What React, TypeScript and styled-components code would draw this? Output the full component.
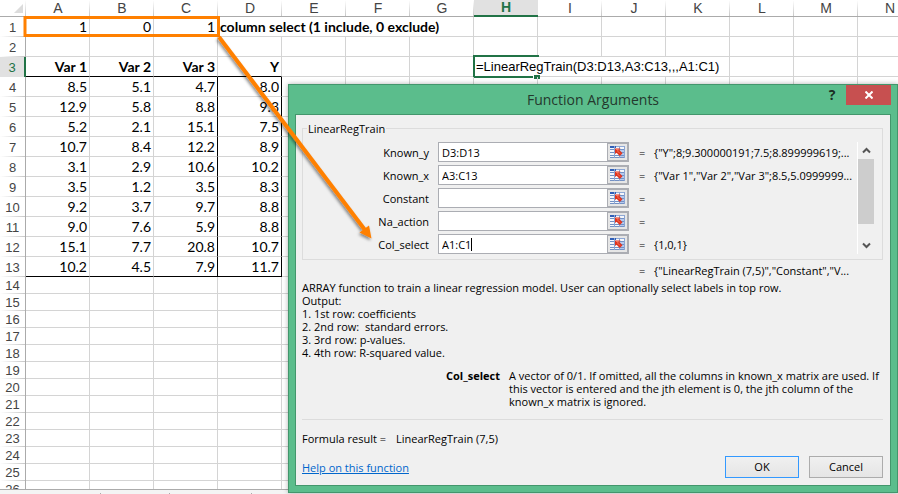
import React from "react";
import styled, { createGlobalStyle, css } from "styled-components";

const GlobalStyle = createGlobalStyle`
  * { box-sizing: border-box; }
  html, body, #root { height: 100%; }
  body { margin: 0; overflow: hidden; background: #fff; }
`;

const uiFont = `"Open Sans", "Noto Sans", sans-serif`;
const sheetFont = `Lato, "Open Sans", sans-serif`;
const headFont = `"Liberation Sans", Arial, sans-serif`;

const Workbook = styled.div`
  position: relative;
  display: flex;
  flex-direction: column;
  height: 100vh;
  overflow: hidden;
`;

const SheetArea = styled.div`
  position: relative;
  flex: 1;
  min-height: 0;
  overflow: hidden;
`;

const Sheet = styled.table`
  width: 922px;
  table-layout: fixed;
  border-collapse: separate;
  border-spacing: 0;
  font: 14px/19px ${sheetFont};
  color: #000;
`;

const HeadCol = styled.col`
  width: 26px;
`;

const ColHead = styled.th<{ $active?: boolean }>`
  height: 17px;
  padding: 0;
  font: 14px/16px ${headFont};
  color: #444;
  border-bottom: 1px solid #ababab;
  background: linear-gradient(#fff, #c8c8c8) right / 1px 100% no-repeat;
  ${(p) =>
    p.$active &&
    css`
      color: #217346;
      font-weight: bold;
      line-height: 15px;
      background: #e1e1e1;
      border-bottom: 2px solid #217346;
    `}
`;

const Corner = styled.th`
  padding: 0 3px 3px 0;
  border-bottom: 1px solid #ababab;
  background: linear-gradient(#fff, #c8c8c8) right / 1px 100% no-repeat;
  vertical-align: bottom;
  svg { display: block; margin-left: auto; }
`;

const RowHead = styled.th<{ $active?: boolean; $short?: boolean }>`
  height: ${(p) => (p.$short ? 17 : 20)}px;
  padding: 0;
  font: 13px/${(p) => (p.$short ? 16 : 19)}px ${headFont};
  color: #444;
  border-right: 1px solid #ababab;
  background: linear-gradient(90deg, #fff, #c8c8c8) bottom / 100% 1px no-repeat;
  ${(p) =>
    p.$active &&
    css`
      color: #217346;
      background: #e1e1e1;
      border-right: 2px solid #217346;
    `}
`;

const Cell = styled.td<{ $bold?: boolean; $left?: boolean; $right?: boolean; $bottom?: boolean }>`
  position: relative;
  padding: 0 2px 0 ${(p) => (p.$left ? 2 : 0)}px;
  text-align: ${(p) => (p.$left ? "left" : "right")};
  font-weight: ${(p) => (p.$bold ? 700 : 400)};
  white-space: nowrap;
  border-right: 1px solid ${(p) => (p.$right ? "#000" : "#d4d4d4")};
  border-bottom: 1px solid ${(p) => (p.$bottom ? "#000" : "#d4d4d4")};
`;

const EditCell = styled(Cell)`
  padding-left: 2px;
  text-align: left;
  font-family: ${headFont};
  font-size: 13px;
`;

const EditFrame = styled.span`
  position: absolute;
  left: -1px;
  top: -2px;
  width: 66px;
  height: 23px;
  border: 2px solid #217346;
  border-right: 0;
  &::after {
    content: "";
    position: absolute;
    right: -1px;
    bottom: -3px;
    width: 6px;
    height: 4px;
    background: #217346;
    border-left: 1px solid #fff;
    border-top: 1px solid #fff;
  }
`;

const EditText = styled.span`
  position: relative;
`;

const TabStrip = styled.div`
  display: flex;
  height: 5px;
  padding-top: 3px;
  border-top: 1px solid #ababab;
  background: #f4f4f4;
`;

const TabEdge = styled.span<{ $w: number }>`
  width: ${(p) => p.$w}px;
  border-right: 1px solid #ababab;
`;

const Dialog = styled.section`
  position: absolute;
  top: 84px;
  left: 288px;
  right: 0;
  padding: 0 6px 6px;
  font: 11px/13px ${uiFont};
  color: #000;
  background: #5bbd8c;
  border: 1px solid #43966c;
  box-shadow: 0 0 5px rgba(0, 0, 0, 0.3);
`;

const TitleBar = styled.header`
  position: relative;
  display: flex;
  align-items: center;
  justify-content: center;
  height: 29px;
`;

const Title = styled.h1`
  margin: 0;
  font: 14px/29px ${uiFont};
  color: #24382d;
`;

const TitleTools = styled.div`
  position: absolute;
  top: 0;
  right: 0;
  display: flex;
  align-items: center;
`;

const HelpButton = styled.button`
  width: 28px;
  height: 20px;
  padding: 0;
  border: 0;
  background: none;
  font: bold 14px/20px ${uiFont};
  color: #1b2d23;
`;

const CloseButton = styled.button`
  display: flex;
  align-items: center;
  justify-content: center;
  width: 45px;
  height: 20px;
  padding: 0;
  border: 0;
  background: #c75050;
`;

const Body = styled.div`
  padding: 7px 7px 7px 6px;
  background: #f0f0f0;
  border: 1px solid #43966c;
`;

const Group = styled.fieldset`
  display: flex;
  gap: 0;
  min-width: 0;
  margin: 0;
  padding: 7px 8px 5px 0;
  border: 1px solid #dcdcdc;
`;

const Legend = styled.legend`
  margin-left: 4px;
  padding: 0 1px;
`;

const Rows = styled.div`
  flex: 1;
  display: flex;
  flex-direction: column;
  gap: 3px;
`;

const Row = styled.div`
  display: grid;
  grid-template-columns: 126px minmax(120px, 1fr) 5px 203px;
  column-gap: 10px;
  align-items: center;
  height: 20px;
`;

const RowLabel = styled.label`
  text-align: right;
`;

const RefBox = styled.div`
  position: relative;
  display: flex;
  height: 20px;
  margin-left: -1px;
`;

const RefInput = styled.input`
  flex: 1;
  min-width: 0;
  padding: 1px 3px 0;
  border: 1px solid #abadb3;
  border-right: 0;
  border-radius: 0;
  outline: 0;
  background: #fff;
  font: 11px/16px ${uiFont};
  color: #000;
`;

const Caret = styled.span`
  position: absolute;
  left: 33px;
  top: 4px;
  width: 1px;
  height: 13px;
  background: #000;
`;

const PickButton = styled.button`
  display: flex;
  align-items: center;
  justify-content: center;
  width: 22px;
  padding: 0;
  border: 2px solid #abadb3;
  border-left-width: 1px;
  background: #e6e6e6;
`;

const Value = styled.output`
  white-space: nowrap;
`;

const ScrollBar = styled.div`
  display: flex;
  flex-direction: column;
  width: 17px;
  border-left: 1px solid #fff;
`;

const ScrollButton = styled.button`
  display: flex;
  align-items: center;
  justify-content: center;
  height: 17px;
  padding: 0;
  border: 0;
  background: none;
`;

const Track = styled.div`
  flex: 1;
`;

const Thumb = styled.div`
  height: 65px;
  background: #cdcdcd;
`;

const ResultRow = styled(Row)`
  height: 21px;
  margin: 0 26px 0 1px;
`;

const Description = styled.p`
  margin: 0;
  white-space: pre-line;
`;

const ArgHelp = styled.dl`
  display: grid;
  grid-template-columns: 198px 1fr;
  column-gap: 9px;
  margin: 10px 0 11px;
  dt { font-weight: 700; text-align: right; }
  dd { margin: 0; }
`;

const Rule = styled.hr`
  margin: 0;
  border: 0;
  border-top: 1px solid #dcdcdc;
`;

const FormulaResult = styled.p`
  display: flex;
  gap: 10px;
  margin: 12px 0 11px;
`;

const Footer = styled.footer`
  display: flex;
  align-items: center;
  gap: 10px;
`;

const HelpLink = styled.a`
  margin-right: auto;
  color: #0066cc;
  text-decoration: underline;
`;

const PushButton = styled.button<{ $primary?: boolean }>`
  width: 74px;
  height: 22px;
  padding: 0;
  border: 1px solid ${(p) => (p.$primary ? "#3399ff" : "#acacac")};
  background: linear-gradient(#f0f0f0, #e5e5e5);
  font: 11px/18px ${uiFont};
  color: #000;
`;

const Annotation = styled.svg`
  position: absolute;
  left: 0;
  top: 0;
  pointer-events: none;
`;

const columns = "ABCDEFGHIJKLMN".split("");

const data = [
  ["8.5", "5.1", "4.7", "8.0"],
  ["12.9", "5.8", "8.8", "9.3"],
  ["5.2", "2.1", "15.1", "7.5"],
  ["10.7", "8.4", "12.2", "8.9"],
  ["3.1", "2.9", "10.6", "10.2"],
  ["3.5", "1.2", "3.5", "8.3"],
  ["9.2", "3.7", "9.7", "8.8"],
  ["9.0", "7.6", "5.9", "8.8"],
  ["15.1", "7.7", "20.8", "10.7"],
  ["10.2", "4.5", "7.9", "11.7"],
];

const args = [
  { name: "Known_y", ref: "D3:D13", value: '{"Y";8;9.300000191;7.5;8.899999619;...' },
  { name: "Known_x", ref: "A3:C13", value: '{"Var 1","Var 2","Var 3";8.5,5.0999999...' },
  { name: "Constant", ref: "", value: "" },
  { name: "Na_action", ref: "", value: "" },
  { name: "Col_select", ref: "A1:C1", value: "{1,0,1}", editing: true },
];

const description = `ARRAY function to train a linear regression model. User can optionally select labels in top row.
Output:
1. 1st row: coefficients
2. 2nd row:\u00a0 standard errors.
3. 3rd row: p-values.
4. 4th row: R-squared value.`;

function Blank({ count }: { count: number }) {
  return (
    <>
      {Array.from({ length: count }, (_, i) => (
        <Cell key={i} />
      ))}
    </>
  );
}

function PickIcon() {
  return (
    <svg width="16" height="14" viewBox="0 0 16 14" aria-hidden="true">
      <g shapeRendering="crispEdges">
        <rect x="0" y="1" width="15" height="12" fill="#f4f7fc" />
        <rect x="0" y="1" width="6" height="2" fill="#2f5fb8" />
        <rect x="6" y="1" width="9" height="1" fill="#8fa9d6" />
        <rect x="10" y="5" width="5" height="7" fill="#b5c9ee" />
        <path d="M0 4.5h15M0 7.5h15M0 10.5h15M0 12.5h15" stroke="#7391c4" />
        <path d="M4.500 1v12M9.500 1v12M14.500 1v12" stroke="#8ba4d2" />
      </g>
      <path d="M5 3.500h5.500L9.300 5l3.200 3.200-2.700 2.800-3.200-3.300L5 9z" fill="#e0321c" />
      <path d="M6 4.500h2.500L7.500 6l2.500 2.500" fill="none" stroke="#f5775f" />
    </svg>
  );
}

function Chevron({ up }: { up?: boolean }) {
  return (
    <svg width="9" height="7" viewBox="0 0 9 7" aria-hidden="true">
      <path d={up ? "M1 5.500 4.500 2 8 5.500" : "M1 1.500 4.500 5 8 1.500"} fill="none" stroke="#555" strokeWidth="2" />
    </svg>
  );
}

function Spreadsheet() {
  return (
    <Sheet>
      <colgroup>
        <HeadCol />
        {columns.map((c) => (
          <col key={c} />
        ))}
      </colgroup>
      <thead>
        <tr>
          <Corner>
            <svg width="9" height="9" viewBox="0 0 9 9" aria-hidden="true">
              <path d="M9 0v9H0z" fill="#dcdcdc" />
            </svg>
          </Corner>
          {columns.map((c) => (
            <ColHead key={c} scope="col" $active={c === "H"}>
              {c}
            </ColHead>
          ))}
        </tr>
      </thead>
      <tbody>
        <tr>
          <RowHead scope="row">1</RowHead>
          <Cell>1</Cell>
          <Cell>0</Cell>
          <Cell>1</Cell>
          <Cell colSpan={4} $left $bold>
            column select (1 include, 0 exclude)
          </Cell>
          <Blank count={7} />
        </tr>
        <tr>
          <RowHead scope="row">2</RowHead>
          <Blank count={14} />
        </tr>
        <tr>
          <RowHead scope="row" $active>
            3
          </RowHead>
          {["Var 1", "Var 2", "Var 3", "Y"].map((h) => (
            <Cell key={h} $bold $bottom>
              {h}
            </Cell>
          ))}
          <Blank count={3} />
          <EditCell colSpan={4}>
            <EditFrame />
            <EditText>=LinearRegTrain(D3:D13,A3:C13,,,A1:C1)</EditText>
          </EditCell>
          <Blank count={3} />
        </tr>
        {data.map((row, r) => (
          <tr key={r}>
            <RowHead scope="row">{r + 4}</RowHead>
            {row.map((v, c) => (
              <Cell key={c} $right={c >= 2} $bottom={r === data.length - 1}>
                {v}
              </Cell>
            ))}
            <Blank count={10} />
          </tr>
        ))}
        {Array.from({ length: 13 }, (_, i) => (
          <tr key={i}>
            <RowHead scope="row" $short>
              {i + 14}
            </RowHead>
            <Blank count={14} />
          </tr>
        ))}
      </tbody>
    </Sheet>
  );
}

function FunctionArguments() {
  return (
    <Dialog role="dialog" aria-labelledby="dialog-title">
      <TitleBar>
        <Title id="dialog-title">Function Arguments</Title>
        <TitleTools>
          <HelpButton aria-label="Help">?</HelpButton>
          <CloseButton aria-label="Close">
            <svg width="8" height="8" viewBox="0 0 8 8" aria-hidden="true">
              <path d="M0.500 0.500l7 7M7.500 0.500l-7 7" stroke="#fff" strokeWidth="2" />
            </svg>
          </CloseButton>
        </TitleTools>
      </TitleBar>
      <Body>
        <Group>
          <Legend>LinearRegTrain</Legend>
          <Rows>
            {args.map((a) => (
              <Row key={a.name}>
                <RowLabel htmlFor={a.name}>{a.name}</RowLabel>
                <RefBox>
                  <RefInput id={a.name} defaultValue={a.ref} />
                  {a.editing && <Caret />}
                  <PickButton aria-label={`Select range for ${a.name}`}>
                    <PickIcon />
                  </PickButton>
                </RefBox>
                <span>=</span>
                <Value>{a.value}</Value>
              </Row>
            ))}
          </Rows>
          <ScrollBar>
            <ScrollButton aria-label="Scroll up">
              <Chevron up />
            </ScrollButton>
            <Track>
              <Thumb />
            </Track>
            <ScrollButton aria-label="Scroll down">
              <Chevron />
            </ScrollButton>
          </ScrollBar>
        </Group>
        <ResultRow>
          <span />
          <span />
          <span>=</span>
          <Value>{'{"LinearRegTrain (7,5)","Constant","V...'}</Value>
        </ResultRow>
        <Description>{description}</Description>
        <ArgHelp>
          <dt>Col_select</dt>
          <dd>
            A vector of 0/1. If omitted, all the columns in known_x matrix are used. If this vector is entered and the
            jth element is 0, the jth column of the known_x matrix is ignored.
          </dd>
        </ArgHelp>
        <Rule />
        <FormulaResult>
          <span>Formula result =</span>
          <span>LinearRegTrain (7,5)</span>
        </FormulaResult>
        <Footer>
          <HelpLink href="#help">Help on this function</HelpLink>
          <PushButton $primary>OK</PushButton>
          <PushButton>Cancel</PushButton>
        </Footer>
      </Body>
    </Dialog>
  );
}

function SelectionArrow() {
  return (
    <Annotation width="400" height="260" viewBox="0 0 400 260" aria-hidden="true">
      <defs>
        <filter id="arrow-shadow" x="-10%" y="-10%" width="120%" height="120%">
          <feDropShadow dx="-1" dy="2" stdDeviation="1.5" floodColor="#000" floodOpacity="0.45" />
        </filter>
      </defs>
      <rect x="25" y="17.500" width="193.500" height="18" fill="none" stroke="#ff8000" strokeWidth="3" />
      <g filter="url(#arrow-shadow)">
        <path d="M219 37 365 230" stroke="#ff8000" strokeWidth="4" />
        <path d="M371.500 238.500 359.500 232.500 369 225.500z" fill="#ff8000" />
      </g>
    </Annotation>
  );
}

export default function App() {
  return (
    <Workbook>
      <GlobalStyle />
      <SheetArea>
        <Spreadsheet />
      </SheetArea>
      <TabStrip>
        <TabEdge $w={101} />
        <TabEdge $w={69} />
        <TabEdge $w={82} />
      </TabStrip>
      <FunctionArguments />
      <SelectionArrow />
    </Workbook>
  );
}
